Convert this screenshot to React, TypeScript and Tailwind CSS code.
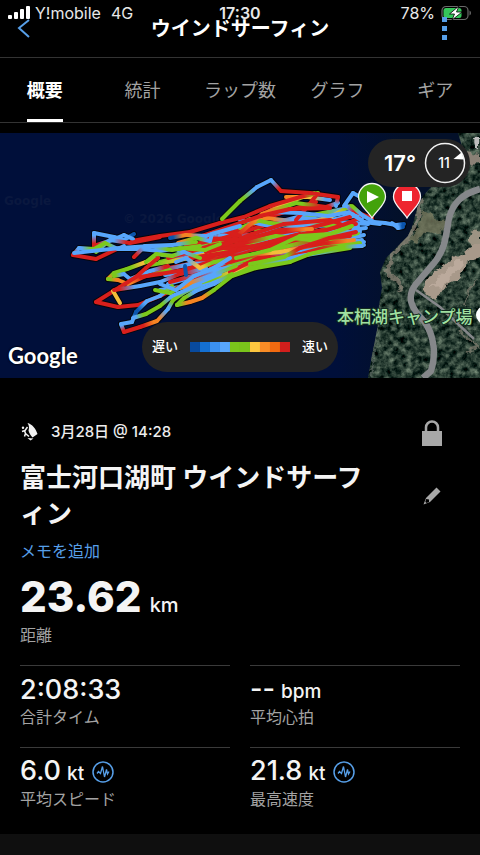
import clsx from 'clsx';

const trackColors: Record<string, string> = {
  d: '#0b55ad',
  b: '#58a6fb',
  g: '#7cc91c',
  y: '#f3bd3a',
  o: '#f58423',
  r: '#d81f1c',
};

// each point is "x,y" followed by the speed colour at that point
const tracks = [
  // dense middle part
  '160,262g 200,252b 250,243r 300,236r 358,228b',
  '158,270r 200,262r 250,250r 310,240r 360,236g',
  '165,275b 210,270r 260,258r 320,246g 362,240b',
  '160,290b 200,284g 240,268r 290,256g 345,246r 364,242b',
  '178,250b 215,243g 250,240r 300,232g 350,215b',
  '162,255b 205,258r 250,256g 290,244r 340,232r 360,232b',
  '200,280b 238,262g 276,250r 320,240b 364,245b',
  '205,240b 240,230r 278,214r 316,202r',
  '256,230g 292,234b 330,232b 366,228b',
  '210,266r 250,250r 300,240r 350,238b 364,235b',
  '220,236b 262,234r 300,226b 340,222b 368,224b',
  '168,284b 196,276b 226,262b 250,258g',
  '170,282r 215,270b 260,262g 310,250r 360,243g',
  '175,296g 210,282b 250,268g 300,256b 350,248g',
  '186,246r 224,238r 262,226r 302,216b 340,212g',
  '196,262r 230,248r 272,228b 318,214g 348,208b',
  '180,288o 210,280g 236,270y 262,258r 310,246r 358,233g',
  '190,270g 225,256r 265,242b 312,232r 352,224g',
  '155,272r 190,264b 230,262r 280,248g 330,236r 358,226b',
  '150,265g 190,258y 240,246g 300,228b 356,222b',
  '240,220b 270,226b 300,218b 330,220b 354,216b',
  '240,228g 266,218o 300,222b 330,226g 356,224r',
  '244,222g 250,219g 270,223g 300,226b 332,216y 350,206g',
  '262,214r 282,205y 314,193g',
  '286,197o 308,197y 330,200b',
  '296,220r 308,206r 318,193r',
  '270,212b 300,213b 328,216b 350,212b 362,218b',
  '168,258r 210,246r 260,236r 310,228r 350,217r',
  '230,272r 262,256r 300,250b 330,242g 362,246g',
  '220,248r 260,246r 300,238r 340,226r 360,218r',
  '190,258r 230,252r 280,240r 316,237g 360,230b',
  '206,252r 240,244r 276,236g 310,240g 350,236r',
  '215,262g 240,256r 280,252y 320,244r 354,240o',
  '204,238r 244,240r 280,230r 312,229o',
  '210,246r 238,250r 270,242r 300,234r',
  '212,250r 252,234r 284,224r 330,220r 350,228r',
  '236,258g 270,250g 300,236g 330,234g 352,226g',
  '250,264g 284,257g 300,248r 330,238r 356,232r',
  '230,242r 262,214o 296,203g 326,207r 338,203b',
  // upper edge
  '132,241r 160,236r 190,232r 220,223r 244,217r 270,206r 300,197r 318,193g',
  '196,238r 226,228r 260,216r 290,209r 330,208r',
  '170,238d 186,235o 206,236b 222,230r 240,236r',
  '178,243o 196,238g 210,241b 212,234b 240,226b',
  '222,219g 240,201g 257,187b 271,180b 281,191r 310,193r 338,197r 336,206b',
  '344,206b 353,193b 362,198b',
  '345,205b 356,212r 372,218r',
  '352,206g 362,215b 374,222b 385,223b 396,225b 404,224d',
  '352,214b 364,222b 380,224b',
  '392,223b 398,228b 403,227d',
  // left loops
  '134,234d 124,240b 114,237b 94,233b 94,246r 112,240b 124,235b 133,239b',
  '96,252g 110,240b 130,243r 160,237r',
  '73,255r 96,259r 117,249r 124,246b',
  '73,255r 79,248b 94,249g 105,243g 118,249b 140,249b 160,251b 180,248g 205,250g 220,244g',
  '74,253b 92,251b 120,248b 150,246b 172,250g 200,246g',
  '134,257r 145,246b 172,245b 196,242g',
  '108,279o 114,273g 127,269g 146,262y 158,258g',
  '108,279g 118,280o 128,284o 146,276r 170,270g',
  '114,276g 124,274b 130,279b 150,271b 168,266r',
  '146,262g 156,254g 172,256g 184,252b 200,258g',
  '96,302r 120,287r 136,277r 146,268r 158,258r',
  '96,302r 118,307r 138,305r 160,296r 190,282r 220,270b',
  '113,291y 120,303y',
  '114,290r 140,286b 160,282b 180,274r 206,268b',
  '140,277r 160,274r 184,270r 210,262r',
  '121,324b 124,332r 140,327r 157,321o 168,309b 173,300g 196,284b 220,274b',
  '121,324b 132,322b 136,312d 147,301b 160,296b 172,286g',
  '133,318b 146,314g 160,306g 172,296b 200,284b',
  '177,305g 184,298g 196,291b 214,284b 232,274g',
  '177,305g 190,302o 202,298o 214,290g 232,276g 256,268g 290,262g 310,254g 340,247g 362,246b',
  '155,290g 170,293g 186,284o 210,276b 236,266g',
  '160,284b 176,290b 194,276b 214,268b 230,258b',
  '176,262b 186,258b 200,268y 214,262g',
  '185,266d 186,275d',
];

type TrackPoint = { x: number; y: number; color: string };

function parseTrack(track: string): TrackPoint[] {
  return track.split(' ').map((part) => {
    const [x, y] = part.slice(0, -1).split(',').map(Number);
    return { x, y, color: trackColors[part.slice(-1)] };
  });
}

const parsedTracks = tracks.map(parseTrack);

const segments = parsedTracks.flatMap((points, t) =>
  points.slice(1).map((to, i) => ({ id: `seg-${t}-${i}`, from: points[i], to })),
);

function TrackLines() {
  return (
    <g fill="none" strokeLinecap="round" strokeLinejoin="round">
      <defs>
        {segments.map(({ id, from, to }) => (
          <linearGradient key={id} id={id} gradientUnits="userSpaceOnUse" x1={from.x} y1={from.y} x2={to.x} y2={to.y}>
            <stop offset="0.2" stopColor={from.color} />
            <stop offset="0.8" stopColor={to.color} />
          </linearGradient>
        ))}
      </defs>
      {parsedTracks.map((points, i) => (
        <polyline key={i} points={points.map((p) => `${p.x},${p.y}`).join(' ')} stroke="#05070d" strokeWidth="6" />
      ))}
      {segments.map(({ id, from, to }) => (
        <path key={id} d={`M${from.x} ${from.y}L${to.x} ${to.y}`} stroke={from.color === to.color ? from.color : `url(#${id})`} strokeWidth="4" />
      ))}
    </g>
  );
}

const landPath =
  'M458 133L480 133V378H368L372 355L377 330L379 305L382 288L380 272L386 258L398 246L408 236L413 224L417 208L423 196L432 186L446 180L466 160Z';

function MapPin({ x, color, children }: { x: number; color: string; children: React.ReactNode }) {
  return (
    <g transform={`translate(${x} 197)`}>
      <path d="M0 21C-4 14 -13.500 8 -13.500 0A13.500 13.500 0 0 1 13.500 0C13.500 8 4 14 0 21Z" fill={color} stroke="#f4f4f4" strokeWidth="1.300" />
      {children}
    </g>
  );
}

function MapDrawing() {
  return (
    <svg viewBox="0 133 480 245" preserveAspectRatio="xMidYMid slice" className="block h-[245px] w-full" aria-hidden="true">
      <defs>
        <clipPath id="land">
          <path d={landPath} />
        </clipPath>
        <filter id="trees" x="0" y="0" width="100%" height="100%" colorInterpolationFilters="sRGB">
          <feTurbulence type="fractalNoise" baseFrequency="0.16" numOctaves="4" seed="8" />
          <feColorMatrix values="0.8 0 0 0 -0.24  0.8 0 0 0 -0.16  0.7 0 0 0 -0.15  0 0 0 0 1" />
        </filter>
        <filter id="rough" x="-10%" y="-10%" width="120%" height="120%">
          <feTurbulence type="fractalNoise" baseFrequency="0.12" numOctaves="3" seed="3" result="n" />
          <feDisplacementMap in="SourceGraphic" in2="n" scale="9" xChannelSelector="R" yChannelSelector="G" />
          <feGaussianBlur stdDeviation="0.6" />
        </filter>
        <linearGradient id="water" x1="0" x2="1" y1="0" y2="0">
          <stop offset="0.7" stopColor="#000f3a" />
          <stop offset="0.84" stopColor="#031029" />
        </linearGradient>
      </defs>
      <rect y="133" width="480" height="245" fill="url(#water)" />
      <g fontFamily="'DejaVu Sans', sans-serif" fontWeight="700" fontSize="12" fill="#0a183f">
        <text x="4" y="205">Google</text>
        <text x="123" y="223">© 2026 Google</text>
      </g>
      <g clipPath="url(#land)">
        <rect x="360" y="133" width="120" height="245" filter="url(#trees)" />
        <g filter="url(#rough)">
          <path d="M421 198C420 214 416 226 405 243L391 255L388 273L399 282L401 292" fill="none" stroke="#8d8578" strokeWidth="4" opacity=".75" />
          <path d="M422 210L436 217L447 223L440 235L426 231L416 244L408 241L418 229Z" fill="#74765c" opacity=".8" />
          <path d="M422 288L433 273L452 259L468 249L480 240V259L467 263L458 278L447 284L436 300L427 296Z" fill="#a8998a" />
          <path d="M430 288L442 273L460 259L463 264L442 287Z" fill="#bbaa9c" />
          <path d="M466 240L475 229L480 231V244L472 246Z" fill="#9d9483" />
          <path d="M463 151L480 153V163L468 164Z" fill="#8a8176" />
          <path d="M464 306L468 291L478 280M459 330L480 349M467 352L480 347" fill="none" stroke="#817e70" strokeWidth="2" opacity=".7" />
          <path d="M379 300L378 327L374 350L370 378" fill="none" stroke="#5d6863" strokeWidth="2" opacity=".7" />
          <path d="M474 140L480 137V148L476 149Z" fill="#bdbdbd" />
        </g>
        <g fill="none" stroke="#85878a" strokeLinejoin="round">
          <path d="M480 189C462 194 453 203 449 218C446 236 445 250 434 263L416 284C406 297 411 308 424 321C435 336 436 356 431 371L423 378" strokeWidth="6.500" />
          <path d="M416 290L440 307L474 339" strokeWidth="2.500" />
        </g>
      </g>
      <TrackLines />
      <MapPin x={407} color="#ee252f">
        <rect x="-5" y="-6" width="10" height="10" fill="#fff" />
      </MapPin>
      <MapPin x={372} color="#43a20b">
        <path d="M-5 -6L7 0L-5 6Z" fill="#fff" />
      </MapPin>
      <circle cx="485" cy="315" r="9" fill="#fff" />
      <text x="337" y="323" fontFamily="'Noto Sans CJK JP', sans-serif" fontSize="17" fontWeight="500" fill="#a0e0a0" stroke="#132a20" strokeWidth="2" paintOrder="stroke">
        本栖湖キャンプ場
      </text>
    </svg>
  );
}

const legendColors = [
  'bg-[#084a9e]',
  'bg-[#1470d2]',
  'bg-[#3b90f0]',
  'bg-[#58a6fb]',
  'bg-[#7ac51b]',
  'bg-[#7ac51b]',
  'bg-[#fcc63f]',
  'bg-[#f88c26]',
  'bg-[#f26a10]',
  'bg-[#d21f1c]',
];

function ActivityMap() {
  return (
    <section className="relative mt-[10px] overflow-hidden" aria-label="地図">
      <MapDrawing />
      <div className="absolute top-[6px] right-[10px] flex h-12 items-center gap-2 rounded-full bg-[#242424] pr-1 pl-4">
        <span className="text-[22px] leading-6 font-semibold text-white">17°</span>
        <svg viewBox="0 0 42 42" className="size-[42px]" aria-hidden="true">
          <circle cx="21" cy="21" r="19.500" fill="none" stroke="#f2f2f2" strokeWidth="1.500" />
          <path d="M29.500 17L37.500 10.500L40 17.500Z" fill="#fff" />
          <text x="20" y="26" textAnchor="middle" fontSize="14" fontWeight="500" fill="#fff">11</text>
        </svg>
      </div>
      <div className="absolute bottom-[6px] left-1/2 flex h-[50px] -translate-x-1/2 items-center gap-3 rounded-full bg-[#242424] px-[10px] text-[13px] font-medium whitespace-nowrap text-white">
        <span>遅い</span>
        <div className="flex">
          {legendColors.map((color, i) => (
            <span key={i} className={clsx('h-[10px] w-[10px]', color)} />
          ))}
        </div>
        <span>速い</span>
      </div>
      <span className="absolute bottom-[8px] left-2 font-['Lato',sans-serif] text-[22px] leading-7 font-bold text-white [text-shadow:0_0_2px_#000,0_0_2px_#000]">
        Google
      </span>
    </section>
  );
}

function StatusBar() {
  return (
    <div className="pointer-events-none absolute inset-x-0 top-0 grid h-[26px] grid-cols-3 items-center px-2 text-base text-[#e8e8e8]">
      <div className="flex items-center">
        <svg viewBox="0 0 22 14" className="h-[14px] w-[22px]" fill="#fff" aria-hidden="true">
          <rect x="0" y="9" width="4" height="4" rx="1" />
          <rect x="6" y="6" width="4" height="7" rx="1" />
          <rect x="12" y="3" width="4" height="10" rx="1" />
          <rect x="18" y="0" width="4" height="13" rx="1" />
        </svg>
        <span className="ml-[5px] text-base">Y!mobile</span>
        <span className="ml-[10px] text-base">4G</span>
      </div>
      <span className="text-center font-semibold">17:30</span>
      <div className="flex items-center justify-end gap-[6px]">
        <span className="text-base">78%</span>
        <svg viewBox="0 0 31 16" className="h-4 w-[31px]" aria-hidden="true">
          <rect x="1" y="1.500" width="26" height="13" rx="4" fill="none" stroke="#6a6a6a" strokeWidth="1.200" />
          <rect x="2.500" y="3" width="18" height="10" rx="2.500" fill="#35c75a" />
          <path d="M28.500 5.500V10.500C30.500 9.500 30.500 6.500 28.500 5.500Z" fill="#6a6a6a" />
          <path d="M18 1L8.500 9H13.500L11 15L21 7H15.500Z" fill="#fff" stroke="#000" strokeWidth=".8" />
        </svg>
      </div>
    </div>
  );
}

const tabs = ['概要', '統計', 'ラップ数', 'グラフ', 'ギア'];

function Header() {
  return (
    <header className="relative">
      <StatusBar />
      <div className="relative flex h-[58px] items-center justify-between border-b border-[#333] pr-8 pl-4">
        <button type="button" aria-label="戻る" className="flex w-6">
          <svg viewBox="0 0 16 20" className="h-5 w-4" aria-hidden="true">
            <path d="M13 1L3 9L13 18" fill="none" stroke="#579fe8" strokeWidth="2" />
          </svg>
        </button>
        <h1 className="text-xl leading-7 font-bold text-white">ウインドサーフィン</h1>
        <button type="button" aria-label="メニュー" className="flex w-[8px] flex-col items-center gap-1">
          <span className="size-[5px] bg-[#579fe8]" />
          <span className="size-[5px] bg-[#579fe8]" />
          <span className="size-[5px] bg-[#579fe8]" />
        </button>
      </div>
      <nav className="overflow-hidden border-b border-[#333]">
        <div className="-mx-1 grid grid-cols-5" role="tablist">
          {tabs.map((tab, i) => (
            <button
              key={tab}
              type="button"
              role="tab"
              aria-selected={i === 0}
              className={clsx(
                'mx-auto h-16 border-b-[3px] pt-1 text-lg whitespace-nowrap',
                i === 0 ? 'border-white font-bold text-white' : 'border-transparent text-[#a3a3a3]',
              )}
            >
              {tab}
            </button>
          ))}
        </div>
      </nav>
    </header>
  );
}

function WindsurfIcon() {
  return (
    <svg viewBox="0 0 18 18" className="size-[18px]" fill="#f2f2f2" aria-hidden="true">
      <path d="M7.500 0C12 1 16 6 17.500 11L12.500 14.500C10.500 12 9 10 8.500 7.500C9.500 5 9 2 7.500 0Z" />
      <circle cx="3" cy="4.800" r="1.200" />
      <path d="M2 8.500L5 7.500L7.500 4M4.500 7.500L5.500 10.500L9 13.500M5.500 10.500L4.500 13.500" fill="none" stroke="#f2f2f2" strokeWidth="1.500" />
      <path d="M7.500 15L13.500 15.500L10.500 17.500Z" />
    </svg>
  );
}

function PulseIcon() {
  return (
    <svg viewBox="0 0 22 22" className="size-[22px]" fill="none" stroke="#579fe8" aria-hidden="true">
      <circle cx="11" cy="11" r="10" strokeWidth="1.500" />
      <path d="M5 12.500L6.500 10.500L8.500 12.500L10.500 5.500L12.500 16L14.500 8.500L15.500 13L17 10.500" strokeWidth="1.300" />
    </svg>
  );
}

type Stat = { value: string; unit?: string; label: string; graph?: boolean };

const stats: Stat[] = [
  { value: '2:08:33', label: '合計タイム' },
  { value: '--', unit: 'bpm', label: '平均心拍' },
  { value: '6.0', unit: 'kt', label: '平均スピード', graph: true },
  { value: '21.8', unit: 'kt', label: '最高速度', graph: true },
];

function StatCell({ stat }: { stat: Stat }) {
  return (
    <div className="border-t border-[#3a3a3a] pt-2 pb-5">
      <div className="flex h-8 items-center">
        <p className="text-[27px] leading-8 font-medium text-[#f4f4f4]">
          {stat.value}
          {stat.unit && <span className="ml-[6px] text-[19px]">{stat.unit}</span>}
        </p>
        {stat.graph && (
          <button type="button" aria-label={`${stat.label}のグラフ`} className="ml-2">
            <PulseIcon />
          </button>
        )}
      </div>
      <p className="mt-px text-base leading-5 text-[#a3a3a3]">{stat.label}</p>
    </div>
  );
}

export default function App() {
  return (
    <div className="min-h-screen bg-[#0f0f0f] font-['Inter','Noto_Sans_CJK_JP',sans-serif]" lang="ja">
      <div className="bg-black pb-[5px]">
        <Header />
        <ActivityMap />
        <main className="px-5 pt-[42px]">
          <div className="flex">
            <div className="flex-1 pr-6">
              <div className="flex h-6 items-center gap-[13px] text-[15px] font-medium text-[#ededed]">
                <WindsurfIcon />
                <span>3月28日 @ 14:28</span>
              </div>
              <h2 className="mt-4 text-[26px] leading-9 font-bold text-[#f4f4f4]">富士河口湖町 ウインドサーフィン</h2>
              <a href="#memo" className="mt-[7px] block text-base leading-6 text-[#579fe8]">メモを追加</a>
            </div>
            <div className="flex w-14 flex-col items-center">
              <button type="button" aria-label="プライバシー">
                <svg viewBox="0 0 22 26" className="h-[26px] w-[22px]" fill="#a8a8a8" aria-hidden="true">
                  <path d="M5 12V7.500A6 6 0 0 1 17 7.500V12" fill="none" stroke="#a8a8a8" strokeWidth="2.500" />
                  <rect x="1" y="11" width="20" height="15" />
                </svg>
              </button>
              <button type="button" aria-label="編集" className="mt-[41px]">
                <svg viewBox="0 0 18 18" className="size-[18px]" fill="#a8a8a8" aria-hidden="true">
                  <path d="M13.500 0.500L17.500 4.500L7 15L0.500 17.500L3 11Z" />
                  <path d="M3.200 12L6 12.500L6 15L3.500 16L2.300 14.800Z" fill="#000" />
                </svg>
              </button>
            </div>
          </div>
          <p className="mt-3 text-[42px] leading-[44px] font-extrabold text-[#f4f4f4]">
            23.62<span className="ml-2 text-xl font-medium">km</span>
          </p>
          <p className="mt-[6px] text-base leading-5 text-[#a3a3a3]">距離</p>
          <div className="mt-5 grid grid-cols-2 gap-x-5">
            {stats.map((stat) => (
              <StatCell key={stat.label} stat={stat} />
            ))}
          </div>
        </main>
      </div>
    </div>
  );
}
